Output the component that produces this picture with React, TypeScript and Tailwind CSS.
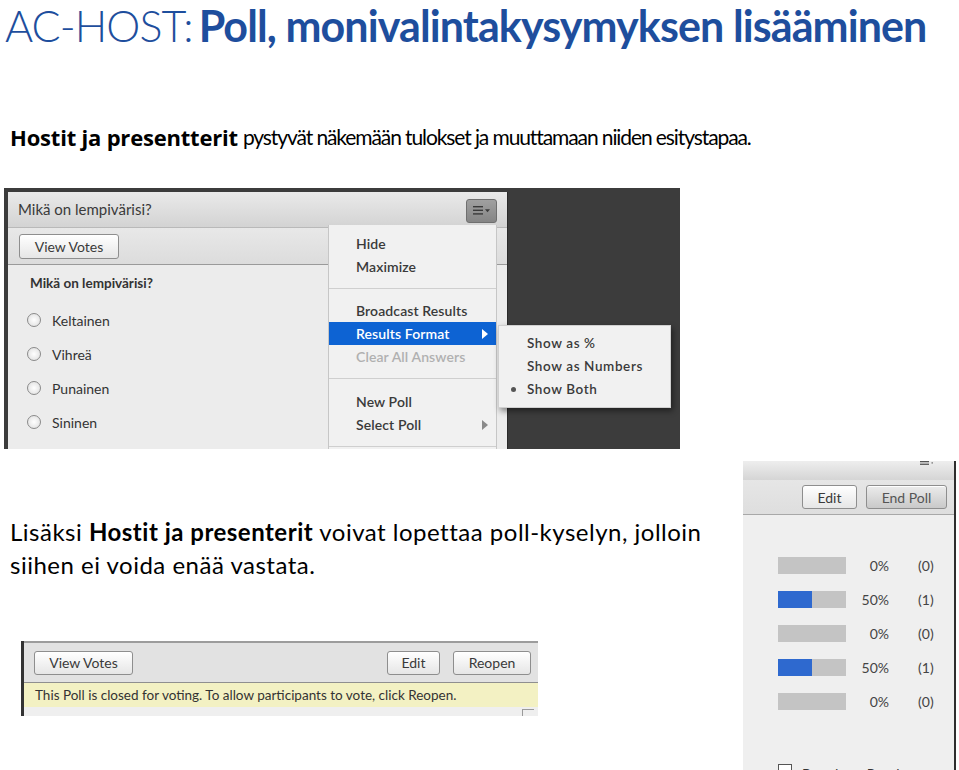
import React from "react";

const UI: React.CSSProperties = { fontFamily: "Lato, 'Open Sans', sans-serif" };
const SLIDE: React.CSSProperties = { fontFamily: "Lato, 'Noto Sans', sans-serif" };

function Btn({ children, className = "", dark = false }: { children: React.ReactNode; className?: string; dark?: boolean }) {
  return (
    <div
      className={
        "flex items-center justify-center rounded-[3px] border border-[#8e8e8e] text-[#3a3a3a] text-[14px] shadow-[inset_0_1px_0_#ffffff] " +
        (dark ? "bg-linear-to-b from-[#ececec] to-[#c9c9c9] " : "bg-linear-to-b from-[#ffffff] to-[#e6e6e6] ") +
        className
      }
      style={UI}
    >
      {children}
    </div>
  );
}

function Radio({ label }: { label: string }) {
  return (
    <div className="flex items-center h-[34px]">
      <div className="w-[14px] h-[14px] rounded-full border border-[#8a8a8a] bg-radial from-[#ffffff] to-[#dcdcdc] ml-[19px]" />
      <span className="ml-[11px] text-[14px] text-[#333]" style={UI}>{label}</span>
    </div>
  );
}

function MenuIcon() {
  return (
    <svg width="20" height="12" viewBox="0 0 20 12">
      <rect x="1" y="1" width="10" height="1.4" fill="#3a3a3a" />
      <rect x="1" y="4.6" width="10" height="1.4" fill="#3a3a3a" />
      <rect x="1" y="8.2" width="10" height="1.4" fill="#3a3a3a" />
      <path d="M13 4.2 L18 4.2 L15.5 7.2 Z" fill="#3a3a3a" />
    </svg>
  );
}

function Arrow({ color }: { color: string }) {
  return (
    <svg width="6" height="10" viewBox="0 0 6 10">
      <path d="M0 0 L6 5 L0 10 Z" fill={color} />
    </svg>
  );
}

function MenuItem({ label, active = false, disabled = false, arrow = false }: { label: string; active?: boolean; disabled?: boolean; arrow?: boolean }) {
  return (
    <div
      className={
        "h-[23px] flex items-center pl-[27px] pr-[8px] text-[14px] font-semibold tracking-[0.1px] " +
        (active ? "bg-[#0d63d3] text-white " : disabled ? "text-[#b0b0b0] " : "text-[#3a3a3a] ")
      }
      style={UI}
    >
      <span className="flex-1">{label}</span>
      {arrow && <Arrow color={active ? "#ffffff" : "#8a8a8a"} />}
    </div>
  );
}

function Sep() {
  return <div className="h-px bg-[#cfcfcf] my-[10px]" />;
}

function SubItem({ label, dot = false }: { label: string; dot?: boolean }) {
  return (
    <div className="h-[23px] flex items-center text-[13.5px] font-semibold text-[#3a3a3a] tracking-[0.6px]" style={UI}>
      <span className="w-[28px] flex justify-center pl-[1px]">
        {dot && <span className="w-[5px] h-[5px] rounded-full bg-[#555] inline-block" />}
      </span>
      <span>{label}</span>
    </div>
  );
}

function BarRow({ pct, n }: { pct: number; n: number }) {
  return (
    <div className="flex items-center h-[17px] mb-[17px]">
      <div className="ml-[35px] w-[68px] h-[17px] bg-[#c4c4c4]">
        <div className="h-full bg-[#2e69cf]" style={{ width: `${(pct / 100) * 68}px` }} />
      </div>
      <span className="w-[43px] text-right text-[14px] text-[#444]" style={UI}>{pct}%</span>
      <span className="ml-[29px] text-[14px] text-[#444]" style={UI}>({n})</span>
    </div>
  );
}

export default function App() {
  return (
    <div className="w-[959px] h-[770px] overflow-hidden bg-white" style={SLIDE}>
      {/* Title */}
      <div className="h-[52px] pl-[5px] flex items-center whitespace-nowrap text-[#1e4e9d] text-[43px] leading-[52px] tracking-[-0.9px]">
        <span className="font-light">AC-HOST: </span>
        <span className="font-bold ml-[6px]">Poll, monivalintakysymyksen lisääminen</span>
      </div>

      {/* Paragraph 1 */}
      <div className="mt-[70px] h-[30px] pl-[10px] flex items-center whitespace-nowrap text-black">
        <span className="font-bold text-[22px] tracking-[-0.2px]" style={{ fontFamily: "'Open Sans', sans-serif" }}>Hostit ja presentterit</span>
        <span className="ml-[5px] text-[21px] tracking-[-1.1px]">pystyvät näkemään tulokset ja muuttamaan niiden esitystapaa.</span>
      </div>

      {/* Screenshot 1 */}
      <div className="mt-[36px] ml-[4px] w-[676px] h-[261px] bg-[#3c3c3c] pt-[4px] pl-[4px] overflow-hidden">
        <div className="relative w-[500px] h-[257px] bg-[#ececec] border-r border-[#2a2a2a]">
          {/* title bar */}
          <div className="h-[36px] flex items-center justify-between bg-linear-to-b from-[#eaeaea] to-[#d3d3d3] border-b border-[#b9b9b9] pl-[10px] pr-[10px]">
            <span className="text-[15px] text-[#3a3a3a]" style={UI}>Mikä on lempivärisi?</span>
            <div className="w-[31px] h-[24px] rounded-[3px] border border-[#6f6f6f] bg-linear-to-b from-[#a0a0a0] to-[#858585] flex items-center justify-center mt-[3px]">
              <MenuIcon />
            </div>
          </div>
          {/* toolbar */}
          <div className="h-[37px] flex items-center bg-linear-to-b from-[#e8e8e8] to-[#dcdcdc] border-b border-[#9a9a9a] pl-[11px]">
            <Btn className="w-[100px] h-[25px]">View Votes</Btn>
          </div>
          {/* content */}
          <div className="pt-[6px]">
            <div className="pl-[22px] h-[24px] flex items-center text-[13.5px] font-bold text-[#333]" style={UI}>Mikä on lempivärisi?</div>
            <div className="mt-[8px]">
              <Radio label="Keltainen" />
              <Radio label="Vihreä" />
              <Radio label="Punainen" />
              <Radio label="Sininen" />
            </div>
          </div>

          {/* dropdown menu */}
          <div className="absolute left-[320px] top-[33px] w-[169px] h-[240px] bg-[#f1f1f1] border-l border-r border-[#c6c6c6] pt-[7px]">
            <MenuItem label="Hide" />
            <MenuItem label="Maximize" />
            <Sep />
            <MenuItem label="Broadcast Results" />
            <MenuItem label="Results Format" active arrow />
            <MenuItem label="Clear All Answers" disabled />
            <Sep />
            <div className="h-[1px]" />
            <MenuItem label="New Poll" />
            <MenuItem label="Select Poll" arrow />
            <Sep />
          </div>

          {/* submenu */}
          <div className="absolute left-[490px] top-[133px] w-[173px] h-[83px] bg-[#f1f1f1] border border-[#d0d0d0] py-[6px] shadow-[2px_3px_6px_rgba(0,0,0,0.45)]">
            <SubItem label="Show as %" />
            <SubItem label="Show as Numbers" />
            <SubItem label="Show Both" dot />
          </div>
        </div>
      </div>

      {/* Lower area */}
      <div className="flex">
        <div className="w-[743px]">
          <div className="pt-[66px] pl-[10px] text-[24px] leading-[33px] text-black tracking-[0.5px]">
            <div className="whitespace-nowrap">
              Lisäksi <span className="font-bold">Hostit ja presenterit</span> voivat lopettaa poll-kyselyn, jolloin
            </div>
            <div className="whitespace-nowrap">siihen ei voida enää vastata.</div>
          </div>

          {/* bottom panel */}
          <div className="mt-[60px] ml-[21px] w-[517px] h-[75px] border-l-[3px] border-[#333] bg-[#efefef] overflow-hidden">
            <div className="h-[2px] bg-[#9c9c9c]" />
            <div className="h-[40px] flex items-center bg-[#e2e2e2] border-b border-[#8f8f8f] pl-[10px] pr-[7px]">
              <Btn className="w-[99px] h-[24px]">View Votes</Btn>
              <div className="flex-1" />
              <Btn className="w-[53px] h-[24px]">Edit</Btn>
              <Btn className="w-[78px] h-[24px] ml-[13px]">Reopen</Btn>
            </div>
            <div className="h-[24px] bg-[#f3f1c3] flex items-center pl-[11px] text-[13.5px] text-[#333] whitespace-nowrap" style={UI}>
              This Poll is closed for voting. To allow participants to vote, click Reopen.
            </div>
            <div className="h-[8px] flex justify-end pr-[4px] pt-[2px]">
              <div className="w-[12px] h-[12px] border-l border-t border-[#9a9a9a]" />
            </div>
          </div>
        </div>

        {/* right panel */}
        <div className="mt-[12px] w-[213px] h-[309px] bg-[#efefef] border-r-2 border-[#2e2e2e] overflow-hidden">
          <div className="h-[19px] bg-linear-to-b from-[#eeeeee] to-[#d5d5d5] flex justify-end items-start pr-[20px]">
            <svg width="14" height="4" viewBox="0 0 14 4">
              <rect x="0" y="0" width="9" height="1.3" fill="#555" />
              <rect x="0" y="2.6" width="9" height="1.3" fill="#555" />
              <rect x="11.5" y="1.2" width="1.4" height="1.4" fill="#777" />
            </svg>
          </div>
          <div className="h-[35px] flex items-center bg-linear-to-b from-[#e6e6e6] to-[#dedede] border-b border-[#a8a8a8] pl-[59px]">
            <Btn className="w-[55px] h-[24px]">Edit</Btn>
            <Btn dark className="w-[81px] h-[24px] ml-[9px] text-[#555]">End Poll</Btn>
          </div>
          <div className="pt-[42px]">
            <BarRow pct={0} n={0} />
            <BarRow pct={50} n={1} />
            <BarRow pct={0} n={0} />
            <BarRow pct={50} n={1} />
            <BarRow pct={0} n={0} />
          </div>
          <div className="mt-[54px] ml-[35px] flex items-start">
            <div className="w-[14px] h-[14px] border border-[#555] bg-white" />
            <span className="ml-[10px] text-[14px] text-[#333] -mt-[1px]" style={UI}>Broadcast Results</span>
          </div>
        </div>
      </div>
    </div>
  );
}
